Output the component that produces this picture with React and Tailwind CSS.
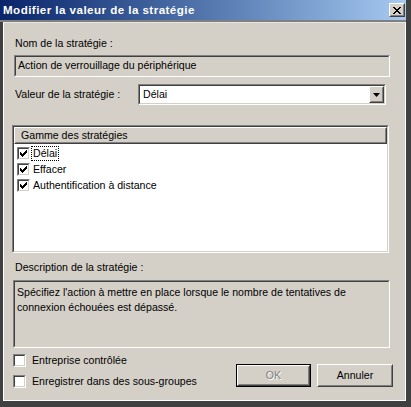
import React from 'react';

const FONT = { fontFamily: '"Liberation Sans", Arial, sans-serif' };

// pixel rows of the classic check glyph: [y, x0, x1]
const CHECK_PIXELS = [
  [0, 6, 6],
  [1, 5, 6],
  [2, 0, 0], [2, 4, 6],
  [3, 0, 1], [3, 3, 5],
  [4, 0, 4],
  [5, 1, 3],
  [6, 2, 2],
];

// classic sunken edge (text fields, list boxes)
function Sunken({ className = '', inner = '', children }) {
  return (
    <div className={`border border-t-[#808080] border-l-[#808080] border-b-white border-r-white ${className}`}>
      <div className={`h-full border border-t-[#404040] border-l-[#404040] border-b-[#d4d0c8] border-r-[#d4d0c8] ${inner}`}>
        {children}
      </div>
    </div>
  );
}

// classic raised edge (buttons)
function Raised({ className = '', inner = '', children }) {
  return (
    <div className={`border border-t-white border-l-white border-b-[#404040] border-r-[#404040] bg-[#d4d0c8] ${className}`}>
      <div className={`h-full border border-t-[#d4d0c8] border-l-[#d4d0c8] border-b-[#808080] border-r-[#808080] ${inner}`}>
        {children}
      </div>
    </div>
  );
}

function CheckBox({ checked }) {
  return (
    <Sunken className="w-[13px] h-[13px] shrink-0" inner="bg-white flex items-center justify-center">
      {checked && (
        <svg width="7" height="7" viewBox="0 0 7 7" className="block" shapeRendering="crispEdges">
          {CHECK_PIXELS.map(([y, x0, x1], i) => (
            <rect key={i} x={x0} y={y} width={x1 - x0 + 1} height="1" fill="#000" />
          ))}
        </svg>
      )}
    </Sunken>
  );
}

const ranges = [
  { label: 'Délai', focus: true },
  { label: 'Effacer' },
  { label: 'Authentification à distance' },
];

export default function App() {
  return (
    <div className="w-[411px] h-[407px] bg-[#404040] flex flex-col text-[10.6px] text-black overflow-hidden" style={FONT}>
      {/* title bar */}
      <div className="h-[20px] mr-[5px] flex items-center justify-between pl-[3px] pr-[1px] bg-gradient-to-r from-[#0a246a] to-[#a6caf0]">
        <span className="text-white font-bold text-[11.6px] tracking-[0.45px]">Modifier la valeur de la stratégie</span>
        <Raised className="w-[16px] h-[14px]" inner="flex items-center justify-center">
          <svg width="8" height="7" viewBox="0 0 8 7" className="block">
            <path d="M0 0 L7 7 M1 0 L8 7 M7 0 L0 7 M8 0 L1 7" stroke="#000" strokeWidth="1" fill="none" />
          </svg>
        </Raised>
      </div>
      <div className="h-[2px] mr-[5px] bg-[#808080]" />

      {/* dialog body */}
      <div className="flex-1 ml-[3px] mr-[5px] mb-[6px] bg-[#d4d0c8] border border-white border-t-[#e8e6e0] flex flex-col pl-[10px] pr-[15px]">
        <div className="mt-[14px] ml-[1px] leading-[13px]">Nom de la stratégie :</div>
        <Sunken className="mt-[5px] h-[22px]" inner="flex items-center pl-[2px] bg-[#d4d0c8]">
          <span>Action de verrouillage du périphérique</span>
        </Sunken>

        <div className="mt-[7px] flex items-center h-[21px]">
          <div className="w-[123px] ml-[1px]">Valeur de la stratégie :</div>
          <Sunken className="w-[248px] h-[21px]" inner="flex items-center bg-white">
            <span className="flex-1 pl-[3px]">Délai</span>
            <Raised className="w-[15px] h-[17px]" inner="flex items-center justify-center">
              <svg width="7" height="4" viewBox="0 0 7 4" className="block">
                <path d="M0 0 H7 L3.5 4 Z" fill="#000" />
              </svg>
            </Raised>
          </Sunken>
        </div>

        {/* range list */}
        <Sunken className="mt-[20px] ml-[-2px] mr-[1px] h-[128px]" inner="bg-white flex flex-col">
          <Raised className="h-[17px]" inner="flex items-center pl-[5px]">
            <span>Gamme des stratégies</span>
          </Raised>
          <div className="flex flex-col pt-[1px] pl-[3px]">
            {ranges.map((r) => (
              <div key={r.label} className="h-[16px] flex items-center gap-[2px]">
                <CheckBox checked />
                <span className={`px-[1px] leading-[13px] ${r.focus ? 'outline outline-1 outline-dotted outline-black' : ''}`}>{r.label}</span>
              </div>
            ))}
          </div>
        </Sunken>

        <div className="mt-[8px] ml-[1px] leading-[13px]">Description de la stratégie :</div>
        <Sunken className="mt-[6px] h-[68px] ml-[-1px]" inner="bg-[#d4d0c8] px-[2px] pt-[3px] leading-[15px]">
          <p>Spécifiez l'action à mettre en place lorsque le nombre de tentatives de</p>
          <p>connexion échouées est dépassé.</p>
        </Sunken>

        {/* footer */}
        <div className="flex mt-[6px] ml-[-1px]">
          <div className="flex flex-col gap-[8px]">
            <div className="flex items-center gap-[6px] h-[13px] leading-[13px]">
              <CheckBox />
              <span>Entreprise contrôlée</span>
            </div>
            <div className="flex items-center gap-[6px] h-[13px] leading-[13px]">
              <CheckBox />
              <span>Enregistrer dans des sous-groupes</span>
            </div>
          </div>
          <div className="ml-auto mr-[-3px] mt-[10px] flex gap-[6px]">
            <div className="border border-black w-[75px] h-[23px]">
              <Raised className="h-full" inner="flex items-center justify-center">
                <span className="text-[#808080] [text-shadow:1px_1px_0_#fff]">OK</span>
              </Raised>
            </div>
            <Raised className="w-[76px] h-[23px]" inner="flex items-center justify-center">
              <span>Annuler</span>
            </Raised>
          </div>
        </div>
      </div>
    </div>
  );
}
